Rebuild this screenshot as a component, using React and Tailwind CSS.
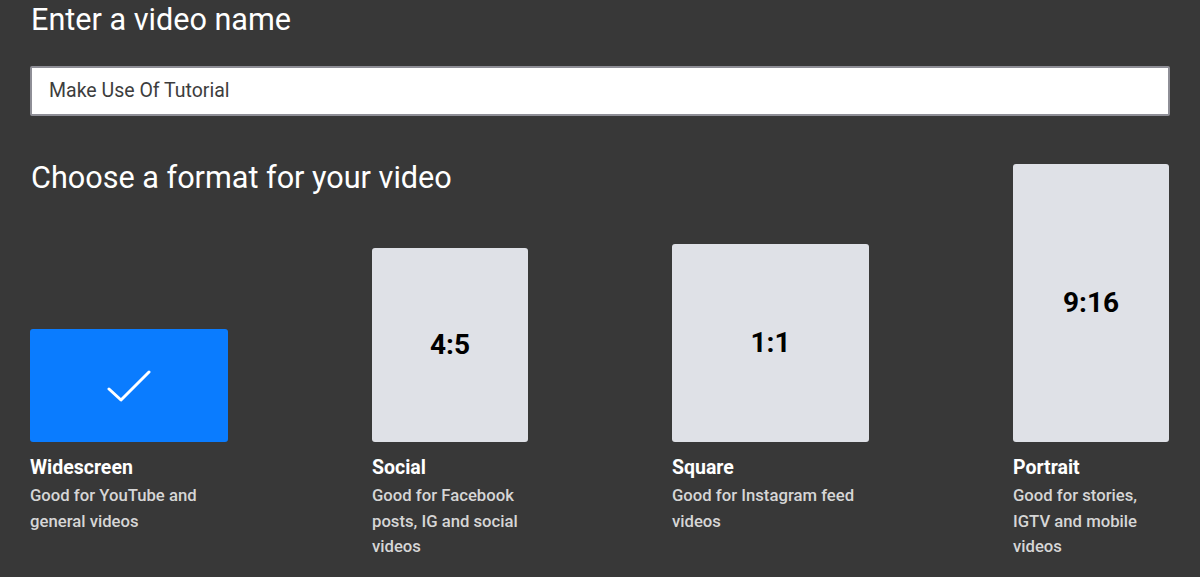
import React from "react";

const formats = [
  { key: "wide", name: "Widescreen", desc: "Good for YouTube and general videos", w: "w-[198px]", h: "h-[113px]", selected: true },
  { key: "social", name: "Social", ratio: "4:5", desc: "Good for Facebook posts, IG and social videos", w: "w-[156px]", h: "h-[194px]" },
  { key: "square", name: "Square", ratio: "1:1", desc: "Good for Instagram feed videos", w: "w-[197px]", h: "h-[198px]" },
  { key: "portrait", name: "Portrait", ratio: "9:16", desc: "Good for stories, IGTV and mobile videos", w: "w-[156px]", h: "h-[278px]" },
];

function Check() {
  return (
    <svg width="44" height="34" viewBox="0 0 44 34" fill="none">
      <path d="M2 20 L14 31 L42 3" stroke="white" strokeWidth="3" strokeLinecap="round" strokeLinejoin="round" />
    </svg>
  );
}

export default function App() {
  return (
    <div className="min-h-[577px] w-[1200px] bg-[#383838] px-[30px] font-['Roboto',sans-serif] overflow-hidden">
      <h1 className="pt-[2px] text-[30.6px] leading-[36px] text-white font-normal pl-[1px]">Enter a video name</h1>
      <div className="mt-[28px] h-[50px] w-[1140px] border-2 border-[#8e8e96] bg-white flex items-center pl-[17px] rounded-[2px]">
        <span className="text-[19.5px] text-[#3d3d3d]">Make Use Of Tutorial</span>
      </div>
      <h2 className="mt-[44px] text-[30.6px] leading-[36px] text-white font-normal pl-[1px]">Choose a format for your video</h2>
      <div className="mt-[-32px] flex items-end gap-[144px]">
        {formats.map((f) => (
          <div key={f.key} className={`${f.w} flex flex-col`}>
            <div className="h-[278px] flex items-end">
              <div
                className={`${f.w} ${f.h} rounded-[3px] flex items-center justify-center ${
                  f.selected ? "bg-[#0a7cff]" : "bg-[#dfe1e7]"
                }`}
              >
                {f.selected ? <Check /> : <span className="text-[28px] font-bold text-black">{f.ratio}</span>}
              </div>
            </div>
            <div className="mt-[15px] text-[19.5px] leading-[22px] font-bold text-white">{f.name}</div>
            <div className="mt-[4px] text-[16.7px] leading-[25.5px] font-medium text-[#d6d6d6] min-h-[77px]">{f.desc}</div>
          </div>
        ))}
      </div>
    </div>
  );
}
